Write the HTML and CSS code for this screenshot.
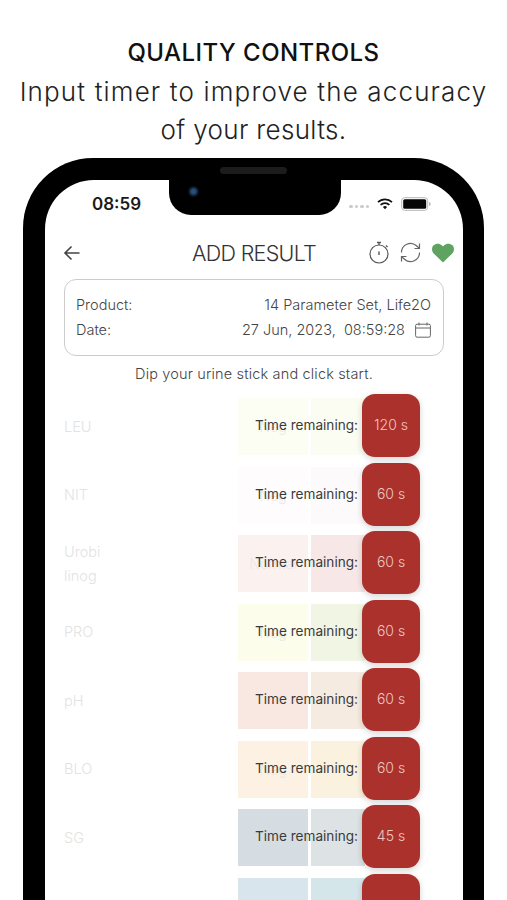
FILE: index.html
```html
<!DOCTYPE html>
<html lang="en">
<head>
<meta charset="utf-8">
<title>Quality Controls</title>
<link rel="stylesheet" href="styles.css">
</head>
<body>
<header class="promo">
  <h1>QUALITY CONTROLS</h1>
  <p>Input timer to improve the accuracy<br><span class="tight">of your results.</span></p>
</header>
<div class="phone">
  <div class="speaker"></div>
  <div class="notch"><span class="camera"></span></div>
  <div class="screen">
    <div class="status">
      <span class="clock">08:59</span>
      <span class="status-icons">
        <span class="signal"><i></i><i></i><i></i><i></i></span>
        <svg class="wifi" width="16" height="12" viewBox="0 0 16 12"><path d="M1 4.2a10 10 0 0 1 14 0M3.6 6.8a6.4 6.4 0 0 1 8.8 0" fill="none" stroke="#111" stroke-width="1.7"/><path d="M5.9 9a3 3 0 0 1 4.2 0L8 11.2z" fill="#111"/></svg>
        <svg class="battery" width="30" height="14" viewBox="0 0 30 14"><rect x="0.7" y="0.7" width="26" height="12.6" rx="3" fill="#fff" stroke="#b5b5b5"/><rect x="2.2" y="2.2" width="23" height="9.6" rx="1.6" fill="#050505"/><path d="M28 5v4c1-.3 1.6-1 1.6-2s-.6-1.7-1.6-2z" fill="#b5b5b5"/></svg>
      </span>
    </div>
    <nav class="nav">
      <svg class="back" width="18" height="16" viewBox="0 0 18 16"><path d="M16.5 8H2M8.500 1.500 2 8l6.500 6.500" fill="none" stroke="#444" stroke-width="1.6"/></svg>
      <span class="title">ADD RESULT</span>
      <span class="nav-icons">
        <svg width="20" height="23" viewBox="0 0 20 23"><circle cx="10" cy="13" r="9" fill="none" stroke="#555" stroke-width="1.2"/><path d="M8 1.500h4M10 1.500v2.500M17 4.500l1.500 1.500" fill="none" stroke="#555" stroke-width="1.3"/><path d="M10 10.500v3.500" stroke="#555" stroke-width="1.4"/></svg>
        <svg width="21" height="21" viewBox="0 0 21 21"><path d="M1.500 10.500a9 9 0 0 1 15-6.800l2.500 2.300M19.500 10.500a9 9 0 0 1-15 6.800L2 15" fill="none" stroke="#666" stroke-width="1.2"/><path d="M19.500 1.500v5H14.500M1.500 19.500v-5H6.500" fill="none" stroke="#666" stroke-width="1.2"/></svg>
        <svg class="heart" width="22" height="20" viewBox="0 0 23 20"><path d="M11.500 20 1.800 10.500C-.6 8-.5 4.200 1.700 2 4.100-.4 8-.4 10.300 2l1.200 1.200L12.700 2c2.300-2.400 6.200-2.400 8.600 0 2.200 2.200 2.300 6-.1 8.500z" fill="#5ea35f"/></svg>
      </span>
    </nav>
    <section class="card">
      <div class="card-row"><span>Product:</span><span>14 Parameter Set, Life2O</span></div>
      <div class="card-row"><span>Date:</span><span class="date"><span>27 Jun, 2023,&nbsp; 08:59:28</span><svg width="16" height="16" viewBox="0 0 16 16"><rect x="0.6" y="2.200" width="14.800" height="13" rx="1.500" fill="none" stroke="#666"/><path d="M.6 6h14.800M4 .5v3M12 .5v3" fill="none" stroke="#666"/></svg></span></div>
    </section>
    <p class="hint">Dip your urine stick and click start.</p>
    <div class="rows">
      <div class="row"><span class="label">LEU</span><div class="pads"><span class="pad a c1"></span><span class="pad b c1b"></span><span class="ghost">Neg</span><span class="timer">Time remaining:</span></div><button class="count">120 s</button></div>
      <div class="row"><span class="label">NIT</span><div class="pads"><span class="pad a c2"></span><span class="pad b c2b"></span><span class="ghost">Neg</span><span class="timer">Time remaining:</span></div><button class="count">60 s</button></div>
      <div class="row"><span class="label">Urobi<br>linog</span><div class="pads"><span class="pad a c3"></span><span class="pad b c3b"></span><span class="ghost">Normal</span><span class="timer">Time remaining:</span></div><button class="count">60 s</button></div>
      <div class="row"><span class="label">PRO</span><div class="pads"><span class="pad a c4"></span><span class="pad b c4b"></span><span class="ghost">Neg</span><span class="timer">Time remaining:</span></div><button class="count">60 s</button></div>
      <div class="row"><span class="label">pH</span><div class="pads"><span class="pad a c5"></span><span class="pad b c5b"></span><span class="timer">Time remaining:</span></div><button class="count">60 s</button></div>
      <div class="row"><span class="label">BLO</span><div class="pads"><span class="pad a c6"></span><span class="pad b c6b"></span><span class="ghost">Neg</span><span class="timer">Time remaining:</span></div><button class="count">60 s</button></div>
      <div class="row"><span class="label">SG</span><div class="pads"><span class="pad a c7"></span><span class="pad b c7b"></span><span class="timer">Time remaining:</span></div><button class="count">45 s</button></div>
      <div class="row row-cut"><div class="pads"><span class="pad a c8"></span><span class="pad b c8b"></span></div><button class="count" aria-label="Timer"></button></div>
    </div>
  </div>
</div>
</body>
</html>
```
FILE: styles.css
```css
* { box-sizing: border-box; }
html, body { margin: 0; height: 900px; overflow: hidden; background: #fff; }
body { font-family: Inter, "Open Sans", sans-serif; color: #222; }

.promo { height: 158px; padding-top: 34px; text-align: center; }
.promo h1 { margin: 0; font-size: 24px; letter-spacing: .45px; line-height: 38.5px; font-weight: 500; color: #111; }
.promo p { margin: 0; font-size: 26px; letter-spacing: 1.15px; line-height: 38.5px; font-weight: 300; color: #222; }
.tight { letter-spacing: .35px; }

.phone { position: relative; width: 461px; height: 742px; margin-left: 23px; background: #000; border-radius: 70px 70px 0 0; padding: 22px 21px 0 22px; }
.speaker { position: absolute; left: 197px; top: 9px; width: 67px; height: 7px; border-radius: 4px; background: #1c1c1c; }
.notch { position: absolute; left: 146px; top: 20px; width: 172px; height: 37px; background: #000; border-radius: 0 0 22px 22px; }
.camera { position: absolute; left: 19px; top: 8px; width: 11px; height: 11px; border-radius: 50%; background: radial-gradient(circle, #25507a 0 25%, #0b1420 60%, #000 100%); }
.screen { height: 100%; background: #fff; border-radius: 49px 49px 0 0; padding: 0 19px; overflow: hidden; }

.status { height: 47px; display: flex; align-items: center; justify-content: space-between; }
.clock { margin-left: 28px; font-size: 17px; font-weight: 600; color: #1a1a1a; }
.status-icons { display: flex; align-items: center; gap: 8px; margin-right: 13px; }
.signal { display: flex; gap: 2px; margin-top: 6px; }
.signal i { width: 3.5px; height: 3.5px; border-radius: 50%; background: #ccc; }

.nav { height: 51px; display: flex; align-items: center; position: relative; }
.back { margin-left: -1px; }
.title { position: absolute; left: 0; right: 0; text-align: center; font-size: 21.5px; letter-spacing: -.7px; font-weight: 300; color: #333; }
.nav-icons { position: absolute; right: -10px; top: 0; bottom: 0; display: flex; align-items: center; gap: 11px; }

.card { margin-top: 1px; height: 77px; border: 1px solid #ccc; border-radius: 12px; padding: 12px 12px 0 11px; font-size: 14.5px; font-weight: 300; color: #444; }
.card-row { height: 25px; display: flex; justify-content: space-between; align-items: center; }
.date { display: flex; align-items: center; gap: 10px; }

.hint { margin: 8px 0 0; height: 20px; line-height: 20px; text-align: center; font-size: 14.5px; letter-spacing: .16px; font-weight: 300; color: #444; }

.rows { margin-top: 10px; width: 356px; }
.row { height: 68.5px; display: flex; align-items: flex-start; }
.row-cut { justify-content: flex-end; }
.label { width: 174px; margin-top: -3px; font-size: 14.5px; line-height: 24px; font-weight: 300; color: #e3e3e3; align-self: center; }
.pads { width: 124px; height: 57px; margin-top: 4px; display: grid; grid-template-columns: 70px 54px; position: relative; align-items: center; }
.pad { height: 57px; grid-row: 1; }
.pad.a { grid-column: 1; }
.pad.b { grid-column: 2; margin-left: 3px; margin-right: -3px; }
.ghost { grid-row: 1; grid-column: 1; margin-top: 0; text-align: center; font-size: 14px; font-weight: 300; color: #e8e8e8; }
.timer { grid-row: 1; grid-column: 1 / 3; margin-left: 17px; margin-top: -3px; white-space: nowrap; font-size: 13.6px; font-weight: 400; color: #3a3a3a; }
.count { width: 58px; height: 63px; flex: none; border: 0; border-radius: 13px; padding: 0 0 2px; background: #ab312c; box-shadow: 0 2px 6px rgba(0,0,0,.18); color: #eec7c0; font: 300 14px Inter, sans-serif; position: relative; }

.c1 { background: #fdfef3; } .c1b { background: #fcfdf2; }
.c2 { background: #fefcfd; } .c2b { background: #fcfafb; }
.c3 { background: #fbf2f0; } .c3b { background: #f7e8e7; }
.c4 { background: #fcfdea; } .c4b { background: #f1f5e4; }
.c5 { background: #f8e8e1; } .c5b { background: #f6ebe0; }
.c6 { background: #fcf1e3; } .c6b { background: #faf1df; }
.c7 { background: #d5dde2; } .c7b { background: #dde3e4; }
.c8 { background: #d8e5ec; } .c8b { background: #d5e6ea; }
```
